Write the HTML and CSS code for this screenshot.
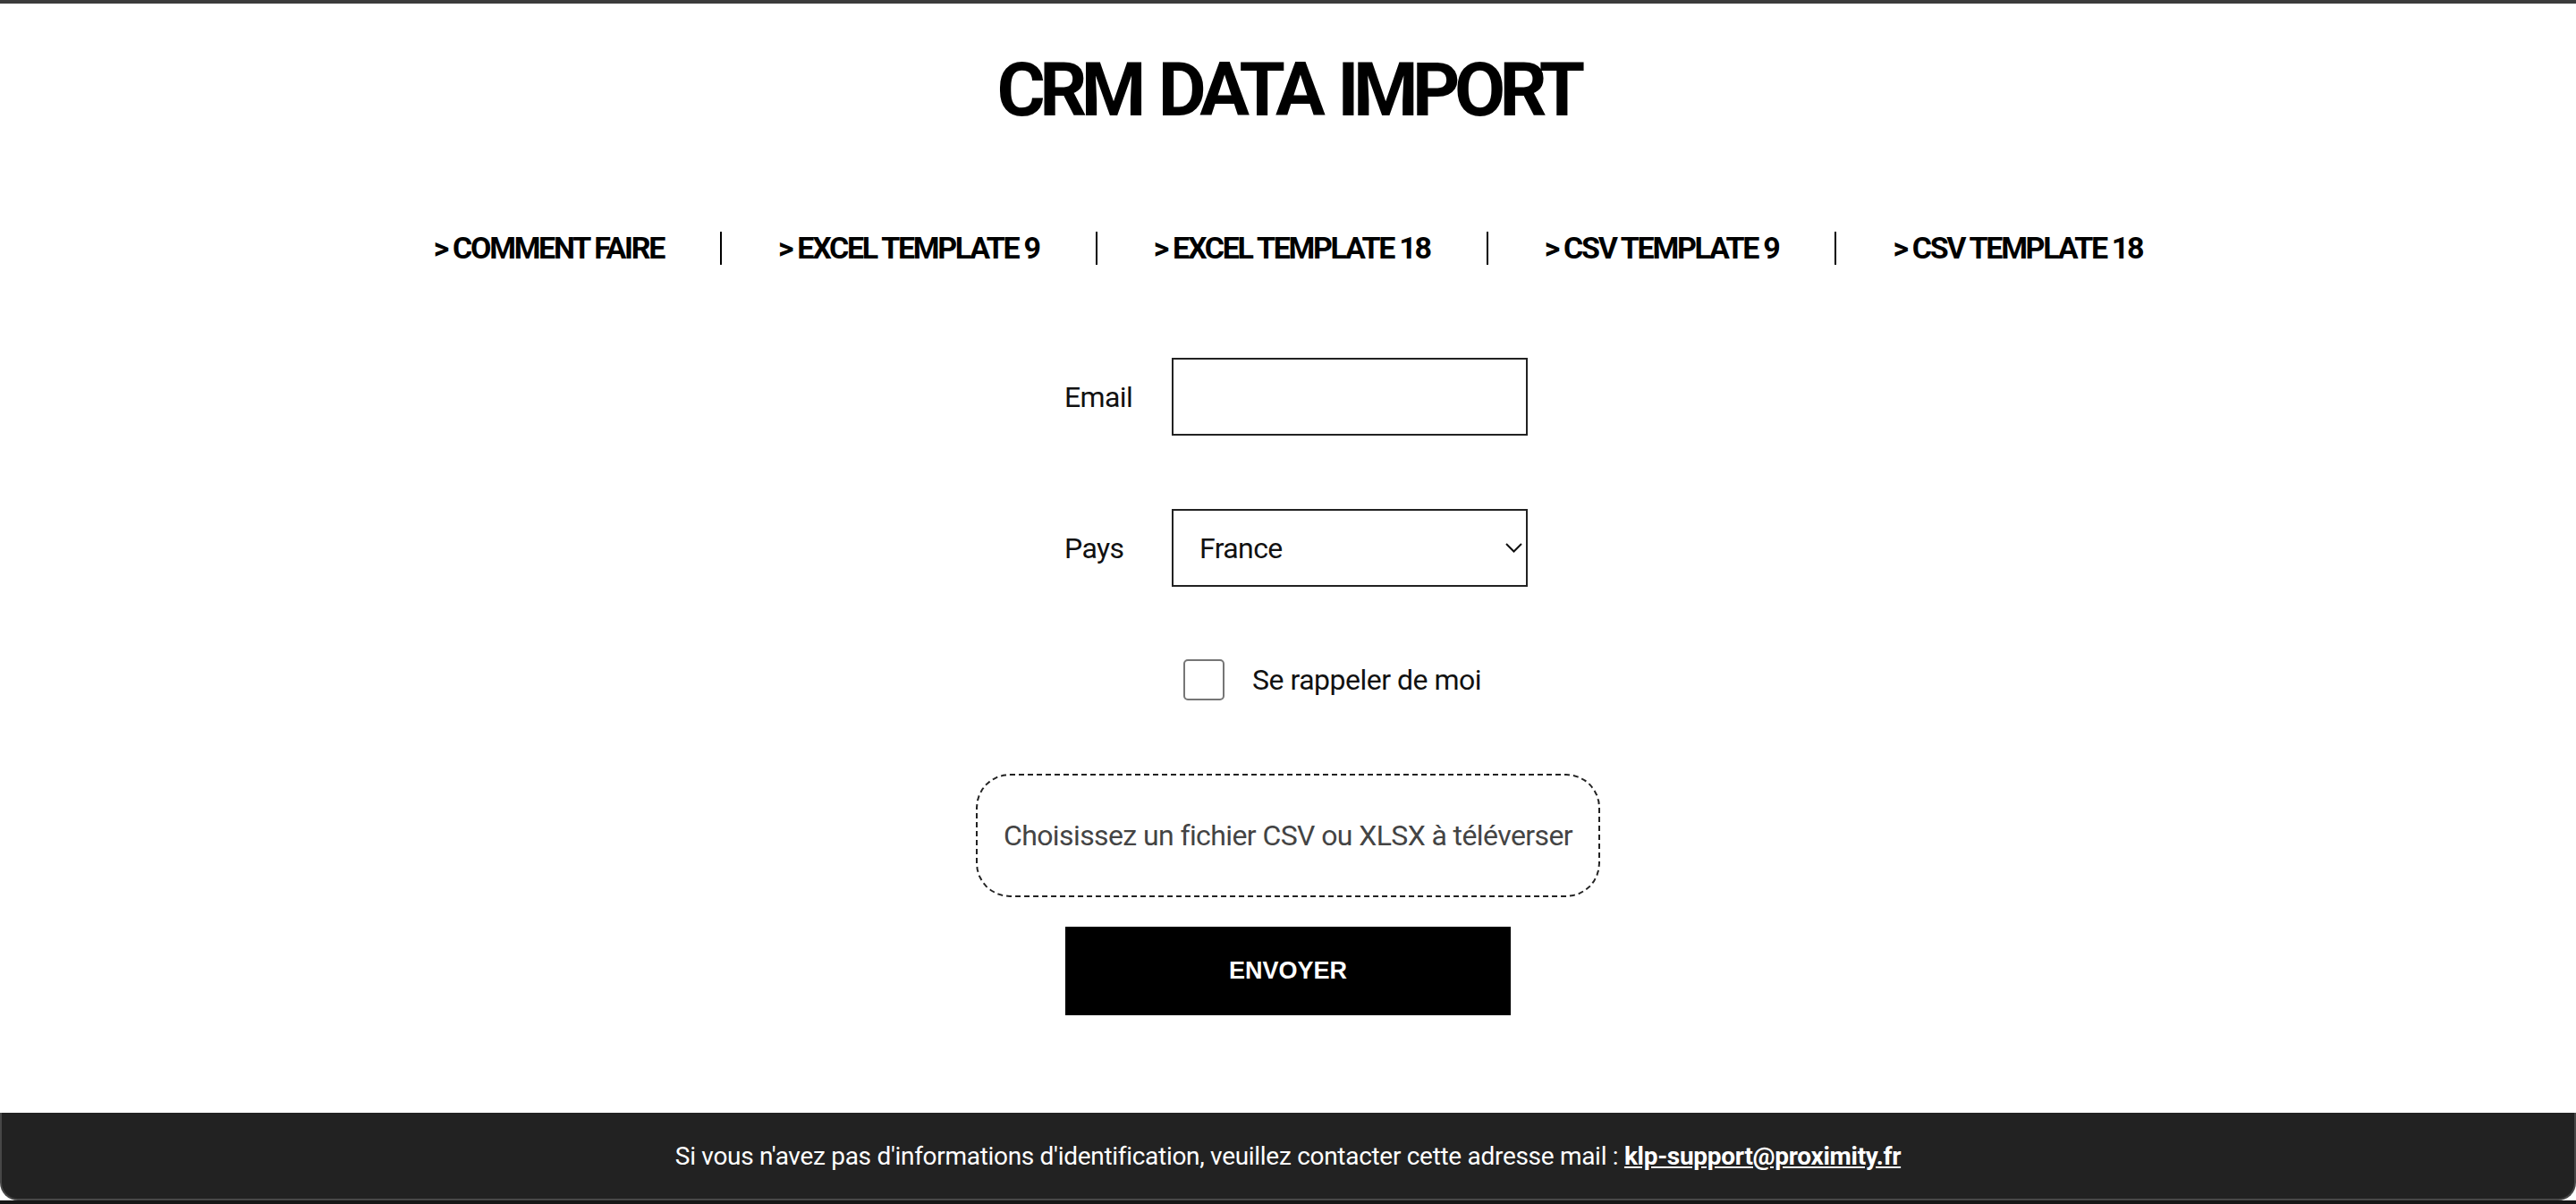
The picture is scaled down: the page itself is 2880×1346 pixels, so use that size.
FILE: index.html
```html
<!DOCTYPE html>
<html lang="fr">
<head>
<meta charset="utf-8">
<title>CRM Data Import</title>
<link rel="stylesheet" href="styles.css">
</head>
<body>
<div class="topline"></div>
<main class="main">
  <h1 class="title">CRM DATA IMPORT</h1>
  <nav class="nav">
    <a class="nav-item" href="#">&gt; COMMENT FAIRE</a>
    <a class="nav-item" href="#">&gt; EXCEL TEMPLATE 9</a>
    <a class="nav-item" href="#">&gt; EXCEL TEMPLATE 18</a>
    <a class="nav-item" href="#">&gt; CSV TEMPLATE 9</a>
    <a class="nav-item" href="#">&gt; CSV TEMPLATE 18</a>
  </nav>
  <form class="form">
    <div class="fields">
      <div class="row">
        <label class="lbl" for="email">Email</label>
        <input class="field" id="email" type="text">
      </div>
      <div class="row row-pays">
        <label class="lbl" for="pays">Pays</label>
        <div class="select-wrap">
          <select class="field select" id="pays"><option>France</option></select>
          <svg class="chevron" width="19" height="11" viewBox="0 0 19 11"><polyline points="1,1 9.5,9.5 18,1" fill="none" stroke="#111" stroke-width="2"/></svg>
        </div>
      </div>
      <label class="check-row">
        <span class="box"></span>
        <span class="check-text">Se rappeler de moi</span>
      </label>
    </div>
    <div class="drop">Choisissez un fichier CSV ou XLSX à téléverser</div>
    <button class="submit" type="button">ENVOYER</button>
  </form>
</main>
<footer class="footer">
  <p class="footer-text">Si vous n'avez pas d'informations d'identification, veuillez contacter cette adresse mail : <a class="footer-link" href="#">klp-support@proximity.fr</a></p>
</footer>
<div class="bottomline"></div>
</body>
</html>
```
FILE: styles.css
```css
html, body {
  margin: 0;
  padding: 0;
}
body {
  background: #ffffff;
  font-family: Roboto, "Liberation Sans", sans-serif;
  color: #000;
  min-height: 100vh;
  display: flex;
  flex-direction: column;
}
.topline {
  height: 4px;
  background: #3b3b3b;
}
.main {
  display: flex;
  flex-direction: column;
  align-items: center;
}
.title {
  margin: 55px 0 0;
  font-size: 83px;
  line-height: 1;
  font-weight: 700;
  letter-spacing: -6.6px;
  word-spacing: 6px;
}
.nav {
  margin-top: 117px;
  display: flex;
}
.nav-item {
  font-size: 34px;
  line-height: 37px;
  font-weight: 700;
  letter-spacing: -2.3px;
  color: #000;
  text-decoration: none;
  padding: 0 63px;
  border-left: 2px solid #000;
}
.nav-item:first-child {
  border-left: none;
}
.form {
  margin-top: 104px;
  display: flex;
  flex-direction: column;
  align-items: center;
}
.fields {
  width: 518px;
  margin-left: 18px;
  display: flex;
  flex-direction: column;
}
.row {
  display: flex;
  align-items: center;
  height: 87px;
}
.row-pays {
  margin-top: 82px;
}
.lbl {
  width: 120px;
  flex-shrink: 0;
  font-size: 32px;
  letter-spacing: -0.6px;
  color: #111;
}
.field {
  box-sizing: border-box;
  width: 398px;
  height: 87px;
  border: 2px solid #222;
  border-radius: 0;
  background: #fff;
  font-family: Roboto, "Liberation Sans", sans-serif;
  font-size: 32px;
  letter-spacing: -0.6px;
  color: #111;
  padding: 0 29px;
  margin: 0;
  outline: none;
}
.select-wrap {
  position: relative;
  width: 398px;
  height: 87px;
}
.select {
  appearance: none;
  -webkit-appearance: none;
}
.chevron {
  position: absolute;
  right: 6px;
  top: 38px;
  pointer-events: none;
}
.check-row {
  margin-top: 81px;
  height: 46px;
  display: flex;
  align-items: center;
  padding-left: 133px;
}
.box {
  box-sizing: border-box;
  width: 46px;
  height: 46px;
  border: 2px solid #767676;
  border-radius: 5px;
  background: #fff;
}
.check-text {
  margin-left: 31px;
  font-size: 32px;
  letter-spacing: -0.5px;
  color: #111;
}
.drop {
  margin-top: 82px;
  box-sizing: border-box;
  width: 698px;
  height: 138px;
  border: 2px dashed #222;
  border-radius: 38px;
  display: flex;
  align-items: center;
  justify-content: center;
  font-size: 32px;
  letter-spacing: -0.6px;
  color: #444;
}
.submit {
  margin-top: 33px;
  width: 498px;
  height: 99px;
  background: #000;
  color: #fff;
  border: none;
  border-radius: 0;
  font-family: "Liberation Sans", Arial, sans-serif;
  font-weight: 700;
  font-size: 27px;
  padding: 0;
}
.footer {
  margin-top: auto;
  box-sizing: border-box;
  height: 98px;
  background: #222;
  border: 2px solid #474747;
  border-top: none;
  border-radius: 0 0 20px 20px;
  display: flex;
  align-items: center;
  justify-content: center;
}
.footer-text {
  margin: 0;
  color: #fff;
  font-size: 28px;
  letter-spacing: -0.3px;
}
.footer-link {
  color: #fff;
  font-weight: 700;
  text-decoration: underline;
}
.bottomline {
  height: 4px;
  background: #161616;
}
```
